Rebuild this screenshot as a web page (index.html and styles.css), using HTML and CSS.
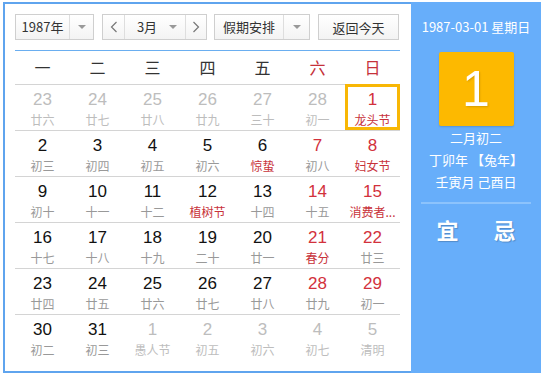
FILE: index.html
```html
<!DOCTYPE html>
<html lang="zh-CN">

<head>
    <meta charset="UTF-8">
    <title>万年历</title>
    <link rel="stylesheet" href="styles.css">
</head>

<body>
    <div class="calendar">
        <div class="main">
            <div class="toolbar">
                <div class="select select-year">
                    <span class="select-text">1987年</span>
                    <span class="select-arrow"><i class="caret"></i></span>
                </div>
                <div class="select select-month">
                    <span class="nav">
                        <svg width="8" height="12" viewBox="0 0 8 12"><polyline points="6.5,1 1.5,6 6.5,11" /></svg>
                    </span>
                    <span class="select-text">3月</span>
                    <span class="select-arrow arrow-plain"><i class="caret"></i></span>
                    <span class="nav">
                        <svg width="8" height="12" viewBox="0 0 8 12"><polyline points="1.5,1 6.5,6 1.5,11" /></svg>
                    </span>
                </div>
                <div class="select select-holiday">
                    <span class="select-text">假期安排</span>
                    <span class="select-arrow"><i class="caret"></i></span>
                </div>
                <button class="btn-today">返回今天</button>
            </div>

            <div class="week">
                <span>一</span><span>二</span><span>三</span><span>四</span><span>五</span>
                <span class="weekend">六</span><span class="weekend">日</span>
            </div>

            <div class="days">
                <div class="day other"><b>23</b><em>廿六</em></div>
                <div class="day other"><b>24</b><em>廿七</em></div>
                <div class="day other"><b>25</b><em>廿八</em></div>
                <div class="day other"><b>26</b><em>廿九</em></div>
                <div class="day other"><b>27</b><em>三十</em></div>
                <div class="day other"><b>28</b><em>初一</em></div>
                <div class="day red fest selected"><b>1</b><em>龙头节</em></div>

                <div class="day"><b>2</b><em>初三</em></div>
                <div class="day"><b>3</b><em>初四</em></div>
                <div class="day"><b>4</b><em>初五</em></div>
                <div class="day"><b>5</b><em>初六</em></div>
                <div class="day fest"><b>6</b><em>惊蛰</em></div>
                <div class="day red"><b>7</b><em>初八</em></div>
                <div class="day red fest"><b>8</b><em>妇女节</em></div>

                <div class="day"><b>9</b><em>初十</em></div>
                <div class="day"><b>10</b><em>十一</em></div>
                <div class="day"><b>11</b><em>十二</em></div>
                <div class="day fest"><b>12</b><em>植树节</em></div>
                <div class="day"><b>13</b><em>十四</em></div>
                <div class="day red"><b>14</b><em>十五</em></div>
                <div class="day red fest"><b>15</b><em>消费者...</em></div>

                <div class="day"><b>16</b><em>十七</em></div>
                <div class="day"><b>17</b><em>十八</em></div>
                <div class="day"><b>18</b><em>十九</em></div>
                <div class="day"><b>19</b><em>二十</em></div>
                <div class="day"><b>20</b><em>廿一</em></div>
                <div class="day red fest"><b>21</b><em>春分</em></div>
                <div class="day red"><b>22</b><em>廿三</em></div>

                <div class="day"><b>23</b><em>廿四</em></div>
                <div class="day"><b>24</b><em>廿五</em></div>
                <div class="day"><b>25</b><em>廿六</em></div>
                <div class="day"><b>26</b><em>廿七</em></div>
                <div class="day"><b>27</b><em>廿八</em></div>
                <div class="day red"><b>28</b><em>廿九</em></div>
                <div class="day red"><b>29</b><em>初一</em></div>

                <div class="day"><b>30</b><em>初二</em></div>
                <div class="day"><b>31</b><em>初三</em></div>
                <div class="day other"><b>1</b><em>愚人节</em></div>
                <div class="day other"><b>2</b><em>初五</em></div>
                <div class="day other"><b>3</b><em>初六</em></div>
                <div class="day other"><b>4</b><em>初七</em></div>
                <div class="day other"><b>5</b><em>清明</em></div>
            </div>
        </div>

        <div class="side">
            <div class="side-date">1987-03-01 星期日</div>
            <div class="side-day">1</div>
            <div class="side-lunar">
                <p>二月初二</p>
                <p>丁卯年 【兔年】</p>
                <p>壬寅月 己酉日</p>
            </div>
            <div class="side-line"></div>
            <div class="side-yiji">
                <span>宜</span>
                <span>忌</span>
            </div>
        </div>
    </div>
</body>

</html>
```

FILE: styles.css
```css
* {
    margin: 0;
    padding: 0;
    box-sizing: border-box;
}

body {
    background: #fff;
    font-family: "Microsoft YaHei", "Noto Sans CJK SC", sans-serif;
    color: #333;
}

.calendar {
    display: flex;
    width: 538px;
    height: 371px;
    margin: 2px 0 0 3px;
    border: 2px solid #5fa4ee;
    border-right: 0;
}

.main {
    width: 406px;
    padding: 10px 11px 0 10px;
    background: #fff;
}

/* toolbar */
.toolbar {
    display: flex;
    height: 26px;
}

.select {
    display: flex;
    height: 26px;
    border: 1px solid #cfcfcf;
    background: linear-gradient(#ffffff, #f3f3f3);
    font-size: 13px;
    line-height: 24px;
    color: #333;
}

.select-text {
    flex: 1;
    text-align: center;
}

.select-arrow {
    width: 24px;
    border-left: 1px solid #dedede;
    display: flex;
    align-items: center;
    justify-content: center;
}

.arrow-plain {
    border-left: 0;
}

.caret {
    display: block;
    width: 0;
    height: 0;
    border-left: 4px solid transparent;
    border-right: 4px solid transparent;
    border-top: 4px solid #999;
}

.select-year {
    width: 79px;
}

.select-month {
    width: 105px;
    margin-left: 8px;
}

.select-month .select-text {
    padding-left: 8px;
}

.nav {
    width: 22px;
    display: flex;
    align-items: center;
    justify-content: center;
}

.nav:first-child {
    border-right: 1px solid #dedede;
}

.nav:last-child {
    border-left: 1px solid #dedede;
    width: 21px;
}

.nav svg polyline {
    fill: none;
    stroke: #777;
    stroke-width: 1.2;
}

.select-holiday {
    width: 96px;
    margin-left: 7px;
}

.select-holiday .select-arrow {
    width: 26px;
}

.btn-today {
    width: 81px;
    height: 26px;
    margin-left: 8px;
    border: 1px solid #cfcfcf;
    background: linear-gradient(#ffffff, #f3f3f3);
    font-family: inherit;
    font-size: 13px;
    color: #333;
}

/* week header */
.week {
    display: grid;
    grid-template-columns: repeat(7, 55px);
    margin-top: 10px;
    border-top: 1px solid #6aaef0;
    height: 34px;
}

.week span {
    text-align: center;
    line-height: 33px;
    font-size: 16px;
    color: #333;
}

.week .weekend {
    color: #c5313a;
}

/* days */
.days {
    display: grid;
    grid-template-columns: repeat(7, 55px);
}

.day {
    height: 46px;
    border-top: 1px solid #d4d4d4;
    padding-top: 5px;
    text-align: center;
}

.day b {
    display: block;
    font-family: "Liberation Sans", Arial, sans-serif;
    font-weight: normal;
    font-size: 17px;
    line-height: 20px;
    color: #111;
}

.day em {
    display: block;
    font-style: normal;
    font-size: 12px;
    line-height: 20px;
    color: #999;
    white-space: nowrap;
}

.day.red b {
    color: #d2313c;
}

.day.fest em {
    color: #c8323a;
}

.day.other b,
.day.other em {
    color: #bdbdbd;
}

.day.selected {
    outline: 3px solid #f8b705;
    outline-offset: -3px;
}

/* right panel */
.side {
    width: 130px;
    margin-top: -2px;
    margin-bottom: -2px;
    padding-top: 16px;
    background: #67aefa;
    color: #fff;
    text-align: center;
}

.side-date {
    font-size: 13px;
    line-height: 18px;
}

.side-day {
    width: 75px;
    height: 74px;
    margin: 16px auto 0;
    background: #fdb900;
    border-radius: 2px;
    box-shadow: 0 1px 2px rgba(0, 0, 0, 0.15);
    font-family: "Liberation Sans", Arial, sans-serif;
    font-size: 50px;
    line-height: 74px;
    text-shadow: 1px 1px 2px rgba(0, 0, 0, 0.15);
}

.side-lunar {
    margin-top: 1px;
    font-size: 13px;
    line-height: 22px;
}

.side-line {
    height: 2px;
    margin: 9px 10px 0;
    background: #8cc3fc;
}

.side-yiji {
    display: flex;
    justify-content: center;
    gap: 35px;
    margin-top: 10px;
    font-size: 22px;
    font-weight: bold;
    line-height: 30px;
    text-shadow: 1px 1px 1px rgba(0, 0, 0, 0.2);
}
```
